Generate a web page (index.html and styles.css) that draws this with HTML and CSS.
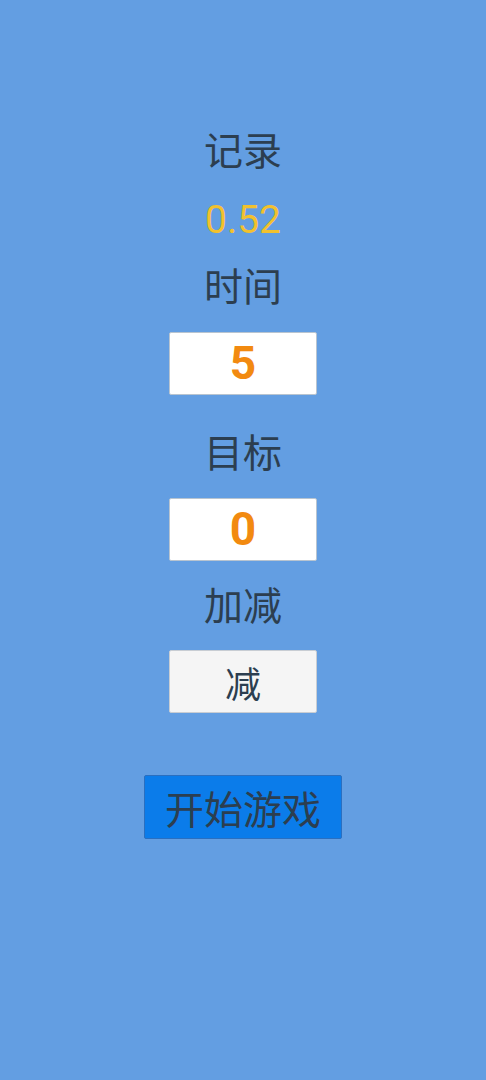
FILE: index.html
```html
<!DOCTYPE html>
<html lang="zh-CN">
<head>
  <meta charset="UTF-8" />
  <meta name="viewport" content="width=device-width, initial-scale=1" />
  <title>计时游戏</title>
  <link rel="stylesheet" href="styles.css">
</head>
<body>
  <div class="game">
    <div class="label">记录</div>
    <div class="record" id="record">0.52</div>
    <div class="label">时间</div>
    <div class="box" id="timeBox">5</div>
    <div class="label gap-top">目标</div>
    <div class="box" id="targetBox">0</div>
    <div class="label">加减</div>
    <button class="toggle" id="modeBtn">减</button>
    <button class="start" id="startBtn">开始游戏</button>
  </div>
</body>
</html>
```

FILE: styles.css
```css
body {
  font-family: Roboto, "Noto Sans CJK SC", sans-serif;
  background-color: #639ee2;
  color: #2c3e50;
  margin: 0;
  padding: 0;
}

.game {
  display: flex;
  flex-direction: column;
  align-items: center;
  padding-top: 118px;
}

.label, .record {
  font-size: 39px;
  line-height: 68px;
  height: 68px;
}

.record {
  color: #f2c12e;
}

.box {
  box-sizing: border-box;
  width: 148px;
  height: 63px;
  margin: 10px 0 0;
  background: #ffffff;
  border: 1px solid #b8c4d0;
  border-radius: 2px;
  color: #f28a10;
  font-size: 46px;
  font-weight: bold;
  line-height: 61px;
  text-align: center;
}

.box + .label {
  margin-top: 12px;
}

.box + .gap-top {
  margin-top: 25px;
}

.toggle, .start {
  font-family: "Noto Sans CJK SC", sans-serif;
  color: #2c3e50;
  border-radius: 2px;
  cursor: pointer;
}

.toggle {
  width: 148px;
  height: 63px;
  margin-top: 9px;
  background: #f5f5f5;
  border: 1px solid #c8cdd3;
  font-size: 36px;
}

.start {
  width: 198px;
  height: 64px;
  margin-top: 62px;
  background: #0b7cea;
  border: 1px solid #2a6fc0;
  font-size: 39px;
  padding: 0;
}
```
